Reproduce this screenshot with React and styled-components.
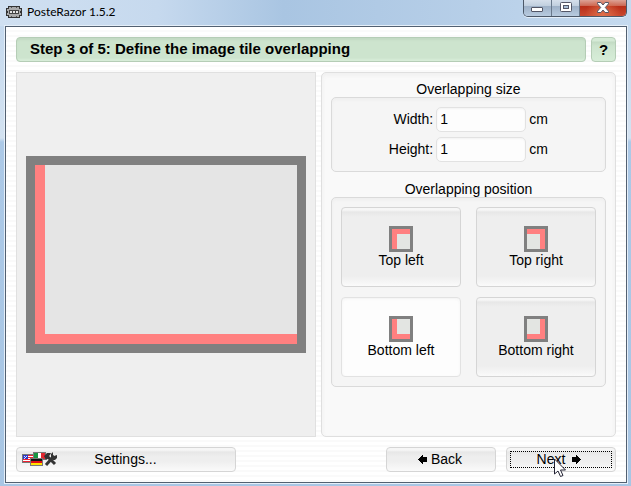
import { useState } from "react";
import styled, { createGlobalStyle, css } from "styled-components";

const positions = ["Top left", "Top right", "Bottom left", "Bottom right"];

const App = () => {
  const [width, setWidth] = useState("1");
  const [height, setHeight] = useState("1");
  const [position, setPosition] = useState("Bottom left");

  return (
    <>
      <GlobalStyle />
      <Window>
        <TitleBar>
          <AppIcon />
          <Title>PosteRazor 1.5.2</Title>
          <WindowControls>
            <WindowButton aria-label="Minimize">
              <svg width="13" height="6" viewBox="0 0 13 6">
                <rect x="0.5" y="0.5" width="11" height="4" rx="0.5" fill="#fff" stroke="#535666" />
              </svg>
            </WindowButton>
            <WindowButton aria-label="Maximize">
              <svg width="12" height="10" viewBox="0 0 12 10">
                <rect x="0.5" y="0.5" width="11" height="9" rx="1" fill="#fff" stroke="#535666" />
                <rect x="3.5" y="3.5" width="5" height="3" fill="#a9bfd6" stroke="#535666" />
              </svg>
            </WindowButton>
            <WindowButton $close aria-label="Close">
              <svg width="12" height="11" viewBox="0 0 12 11">
                <path
                  d="M.5.5h3.400L6 3 8.100.5h3.400v1.300L8.300 5.500l3.200 3.700v1.300H8.100L6 8l-2.100 2.500H.5V9.200l3.200-3.700L.5 1.800z"
                  fill="#fff"
                  stroke="#535666"
                />
              </svg>
            </WindowButton>
          </WindowControls>
        </TitleBar>

        <Client>
          <Header>
            <StepTitle>Step 3 of 5: Define the image tile overlapping</StepTitle>
            <HelpButton>?</HelpButton>
          </Header>

          <Main>
            <PreviewPanel>
              <Preview $position={position} />
            </PreviewPanel>

            <Options>
              <GroupTitle id="size-title">Overlapping size</GroupTitle>
              <SizeGroup role="group" aria-labelledby="size-title">
                <label htmlFor="width">Width:</label>
                <TextInput id="width" value={width} onChange={(e) => setWidth(e.target.value)} />
                <span>cm</span>
                <label htmlFor="height">Height:</label>
                <TextInput id="height" value={height} onChange={(e) => setHeight(e.target.value)} />
                <span>cm</span>
              </SizeGroup>

              <GroupTitle id="position-title">Overlapping position</GroupTitle>
              <PositionGroup role="radiogroup" aria-labelledby="position-title">
                {positions.map((name) => (
                  <PositionOption key={name}>
                    <input
                      type="radio"
                      name="position"
                      checked={position === name}
                      onChange={() => setPosition(name)}
                    />
                    <Tile $position={name} />
                    {name}
                  </PositionOption>
                ))}
              </PositionGroup>
            </Options>
          </Main>

          <Footer>
            <SettingsButton>
              <SettingsIcon />
              <span>Settings...</span>
            </SettingsButton>
            <NavButton>
              <Arrow />
              Back
            </NavButton>
            <NavButton $focused>
              Next
              <Arrow $right />
              <Pointer />
            </NavButton>
          </Footer>
        </Client>
      </Window>
    </>
  );
};

const AppIcon = () => (
  <svg width="16" height="12" viewBox="0 0 16 12" shapeRendering="crispEdges" aria-hidden="true">
    <path d="M2 0h12v2h2v8h-2v2H2v-2H0V2h2z" fill="#333" />
    <path d="M3 1h10v2h2v2h-1v2h1v2h-2v2H3V9H1V7h1V5H1V3h2z" fill="#aaa" />
    <path d="M3 4h10v4H3z" fill="#444" />
    <path d="M4 5h2v2H4zM7 5h2v2H7zM10 5h2v2h-2z" fill="#e6e6e6" />
    <path d="M5 1h1v1H5zM10 1h1v1h-1zM5 10h1v1H5zM10 10h1v1h-1z" fill="#555" />
  </svg>
);

const SettingsIcon = () => (
  <svg width="35" height="14" viewBox="0 0 35 14" aria-hidden="true">
    <g shapeRendering="crispEdges">
      <rect x="0" y="2" width="12" height="9" fill="#777" />
      <path d="M1 3h10v7H1z" fill="#fff" />
      <path d="M1 3h10v1H1zM1 5h10v1H1zM1 7h10v1H1zM1 9h10v1H1z" fill="#f02030" />
      <path d="M1 3h5v4H1z" fill="#2a38c8" />
      <path d="M2 4h1v1H2zM4 4h1v1H4zM3 5h1v1H3zM2 6h1v1H2z" fill="#dfe3ff" />
      <rect x="11" y="0" width="13" height="8" fill="#777" />
      <path d="M12 1h4v6h-4z" fill="#159640" />
      <path d="M16 1h3v6h-3z" fill="#fff" />
      <path d="M19 1h4v6h-4z" fill="#e22730" />
      <rect x="8" y="6" width="13" height="8" fill="#777" />
      <path d="M9 7h11v2H9z" fill="#111" />
      <path d="M9 9h11v2H9z" fill="#e00b13" />
      <path d="M9 11h11v2H9z" fill="#ffe000" />
    </g>
    <path d="M24 13l8-9" stroke="#333" strokeWidth="3" />
    <path d="M25 4l8 8" stroke="#333" strokeWidth="3" />
    <path d="M22 4l3-3h4l-1 2-1 1v2l-3 2z" fill="#333" />
    <path d="M29 5V2l2-2v3l1 1 3-1v3l-2 2h-2z" fill="#333" />
  </svg>
);

const Arrow = ({ $right }) => (
  <svg width="9" height="9" viewBox="0 0 9 9" shapeRendering="crispEdges" aria-hidden="true">
    <path
      d={
        $right
          ? "M0 2h4V0h1v1h1v1h1v1h1v1h1v1H8v1H7v1H6v1H5v1H4V7H0z"
          : "M9 2H5V0H4v1H3v1H2v1H1v1H0v1h1v1h1v1h1v1h1v1h1V7h4z"
      }
      fill="#000"
    />
  </svg>
);

const Pointer = () => (
  <PointerIcon width="13" height="20" viewBox="0 0 13 20" aria-hidden="true">
    <path
      d="M.5 1v15l3.500-3 2.500 5.500 2.500-1L6.500 12h5z"
      fill="#fff"
      stroke="#223"
    />
  </PointerIcon>
);

export default App;

const GlobalStyle = createGlobalStyle`
  * {
    box-sizing: border-box;
  }

  body {
    margin: 0;
    color: #000;
    font: 14px/16px "Liberation Sans", Arial, sans-serif;
  }

  button, input {
    font: inherit;
    color: inherit;
  }

  svg {
    flex: none;
  }
`;

const Window = styled.div`
  display: flex;
  flex-direction: column;
  min-height: 100vh;
  padding: 0 4px 3px 5px;
  background: linear-gradient(#c3d8ee 0, #d3e2f1 138px, #acc9e7 142px, #a8c6e4 100%);
`;

const TitleBar = styled.header`
  display: flex;
  align-items: center;
  gap: 5px;
  height: 26px;
  margin: 0 -4px 0 -5px;
  padding: 0 4px 2px 6px;
  background: linear-gradient(90deg, #d0e0f1, #c6d9ee 25%, #a9c5e2 45%, #b7cfe8 75%, #c5daef);
`;

const Title = styled.span`
  flex: 1;
  font: 12px/16px Lato, "Open Sans", sans-serif;
`;

const WindowControls = styled.div`
  display: flex;
  align-self: flex-start;
  height: 17px;
  border: 1px solid #4c5868;
  border-top: 0;
  border-radius: 0 0 5px 5px;
  box-shadow: 0 1px 0 #e4eef8;
  overflow: hidden;
`;

const WindowButton = styled.button`
  display: flex;
  align-items: center;
  justify-content: center;
  width: 28px;
  padding: 0 0 2px;
  border: 0;
  border-right: 1px solid #69798c;
  background: linear-gradient(#d5dfeb 0, #c2d0df 35%, #9eb1c7 40%, #b8cbdf 100%);

  &:first-child {
    padding: 4px 0 0;
  }

  ${({ $close }) =>
    $close &&
    css`
      width: 46px;
      border-right: 0;
      background: radial-gradient(circle at 50% 100%, #e0714c, transparent 65%),
        linear-gradient(#dda295 0, #cc6a56 35%, #b92e18 40%, #c9482e 100%);
    `}
`;

const Client = styled.div`
  flex: 1;
  display: flex;
  flex-direction: column;
  gap: 10px;
  padding: 10px;
  border: 1px solid #526071;
  outline: 1px solid #e5eff9;
  background: repeating-linear-gradient(#fff 0 3px, #fafafa 3px 5px);
`;

const raised = css`
  border: 1px solid #d5d5d5;
  border-radius: 4px;
  background: linear-gradient(#f6f6f6 0, #f6f6f6 2px, #e7e7e7 4px, #eee 9px, #eee calc(100% - 10px), #fafafa 100%);
`;

const green = css`
  border: 1px solid #b5cdb6;
  border-radius: 4px;
  background: #cde4ce;
  font-weight: bold;
`;

const Header = styled.div`
  display: flex;
  gap: 5px;
  height: 25px;
`;

const StepTitle = styled.h1`
  ${green}
  flex: 1;
  margin: 0;
  padding: 0 13px;
  font-size: 15px;
  line-height: 22px;
  box-shadow: inset 0 2px 2px #c2dac3, inset 0 -2px 2px #d7edd8;
`;

const HelpButton = styled.button`
  ${green}
  width: 25px;
  padding: 0;
  background: linear-gradient(#d5ead6 0, #d5ead6 3px, #c2dac3 4px, #cde4ce 8px, #d7edd8 100%);
  font-size: 15px;
`;

const Main = styled.main`
  flex: 1;
  display: grid;
  grid-template-columns: 300fr 295fr;
  gap: 5px;
`;

const PreviewPanel = styled.section`
  display: flex;
  align-items: center;
  padding: 0 9px;
  border: 1px solid #e0e0e0;
  background: #efefef;
`;

// sides of the tile that carry the overlap strip
const edges = (position, size) => {
  const vertical = position.startsWith("Top") ? size : `-${size}`;
  const horizontal = position.endsWith("left") ? size : `-${size}`;
  return `inset ${horizontal} ${vertical} 0 #ff8080`;
};

const Preview = styled.div`
  flex: 1;
  aspect-ratio: 280 / 197;
  border: 9px solid #808080;
  background: #e5e5e5;
  box-shadow: ${({ $position }) => edges($position, "10px")};
`;

const Options = styled.section`
  padding: 9px;
  border: 1px solid #dfdfdf;
  border-radius: 5px;
  background: #f9f9f9;
  box-shadow: inset 0 2px 4px #efefef;
`;

const GroupTitle = styled.h2`
  margin: 0;
  font-size: 14px;
  font-weight: normal;
  line-height: 15px;
  text-align: center;
`;

const group = css`
  display: grid;
  border: 1px solid #dadada;
  border-radius: 5px;
  background: #f5f5f5;
  box-shadow: inset 0 2px 3px #efefef;
`;

const SizeGroup = styled.div`
  ${group}
  grid-template-columns: 4fr 90px 3fr;
  align-items: center;
  gap: 5px 3px;
  margin-bottom: 10px;
  padding: 9px 0;

  label, span {
    padding-bottom: 2px;
  }

  label {
    text-align: right;
  }
`;

const TextInput = styled.input`
  width: 100%;
  height: 25px;
  padding: 0 3px 2px;
  border: 1px solid #e2e2e2;
  border-radius: 5px;
  outline: 0;
  background: #fdfdfd;
  box-shadow: inset 0 1px 2px #f2f2f2;
`;

const PositionGroup = styled.div`
  ${group}
  grid-template-columns: 1fr 1fr;
  gap: 10px 15px;
  padding: 9px;
`;

const PositionOption = styled.label`
  ${raised}
  display: flex;
  flex-direction: column;
  align-items: center;
  justify-content: center;
  height: 80px;

  &:has(input:checked) {
    border-color: #e2e2e2;
    background: #fdfdfd;
    box-shadow: inset 0 1px 3px #f2f2f2;
  }

  input {
    position: absolute;
    opacity: 0;
    pointer-events: none;
  }
`;

const Tile = styled.span`
  width: 24px;
  height: 26px;
  border: 3px solid #808080;
  background: #e3e5e2;
  box-shadow: ${({ $position }) => edges($position, "5px")};
`;

const Footer = styled.footer`
  display: flex;
  gap: 10px;
`;

const SettingsButton = styled.button`
  ${raised}
  display: flex;
  align-items: center;
  width: 220px;
  height: 25px;
  margin-right: auto;
  padding: 0 5px 1px;

  span {
    flex: 1;
    padding-right: 36px;
  }
`;

const NavButton = styled.button`
  ${raised}
  position: relative;
  display: flex;
  align-items: center;
  justify-content: center;
  gap: ${({ $focused }) => ($focused ? "7px" : "4px")};
  width: 110px;
  height: 25px;
  padding: 0 2px 1px 0;

  ${({ $focused }) =>
    $focused &&
    css`
      padding-right: 4px;

      &::after {
        content: "";
        position: absolute;
        inset: 3px;
        border: 1px dotted #000;
      }
    `}
`;

const PointerIcon = styled.svg`
  position: absolute;
  z-index: 1;
  left: 47px;
  top: 10px;
`;
